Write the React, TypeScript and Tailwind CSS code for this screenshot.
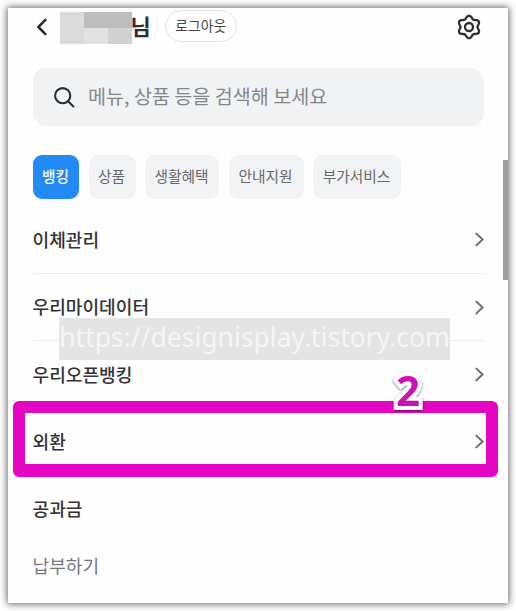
const tabs = [
    { label: "뱅킹", width: "w-[46px]", active: true },
    { label: "상품", width: "w-[47px]" },
    { label: "생활혜택", width: "w-[74px]" },
    { label: "안내지원", width: "w-[75px]" },
    { label: "부가서비스", width: "w-[88px]" },
];

const menus = ["이체관리", "우리마이데이터", "우리오픈뱅킹", "외환"];

// six rounded teeth, first one pointing up
const gearPoints = Array.from({ length: 72 }, (_, i) => {
    const angle = (i * Math.PI) / 36;
    const radius = 9.85 + 1.4 * Math.cos(6 * angle);
    return `${(12 + radius * Math.sin(angle)).toFixed(2)},${(13 - radius * Math.cos(angle)).toFixed(2)}`;
}).join(" ");

function Chevron() {
    return (
        <svg width="9" height="15" viewBox="0 0 9 15" fill="none" stroke="#6c6c6e" strokeWidth="2" strokeLinecap="round">
            <path d="M1.4 1.6 7.6 7.5 1.4 13.4" />
        </svg>
    );
}

function Header() {
    return (
        <header className="flex h-[60px] items-start pl-[25px] pr-[27px]">
            <svg className="ml-1 mt-[10px]" width="11" height="18" viewBox="0 0 11 18" fill="none" stroke="#2b2b2d" strokeWidth="2.5" strokeLinecap="round">
                <path d="M8.4 1.9 1.3 9 8.4 16.1" />
            </svg>
            <div className="ml-3 mt-1 grid h-8 w-[72px] grid-cols-3 grid-rows-2">
                <div className="bg-[#dadadc]" />
                <div className="col-span-2 bg-[#bdbdbe]" />
                <div className="bg-[#dadadb]" />
                <div className="bg-[#e2e1df]" />
                <div className="bg-[#d1d1d3]" />
            </div>
            <span className="-ml-[1.5px] mt-px text-[22px] font-bold leading-8 text-[#2e2e30]">님</span>
            <button className="ml-[14px] mt-[2px] h-8 w-[72px] whitespace-nowrap rounded-full border border-[#e4e4e6] pb-px text-[13.8px] leading-none text-[#444]">
                로그아웃
            </button>
            <svg className="ml-auto mt-[6px]" width="24" height="26" viewBox="0 0 24 26" fill="none" stroke="#2e2e30" strokeWidth="2.3" strokeLinejoin="round">
                <polygon points={gearPoints} />
                <circle cx="12" cy="13" r="4" />
            </svg>
        </header>
    );
}

export default function App() {
    return (
        <div className="h-[611px] w-[516px] overflow-hidden bg-white p-2 font-['Noto_Sans_CJK_KR',sans-serif]">
            <main className="relative h-[595px] w-[500px] bg-[#fefefe] shadow-[0_0_7px_1px_rgba(0,0,0,0.6)]">
                <Header />
                <div className="mx-[25px] flex h-[58px] w-[451px] items-center rounded-[13px] bg-[#f1f2f4] pl-[21px]">
                    <svg width="21" height="21" viewBox="0 0 21 21" fill="none" stroke="#2c2e33" strokeWidth="2.1" strokeLinecap="round">
                        <circle cx="8.7" cy="8.7" r="7.6" />
                        <path d="m14.4 14.4 5 5" />
                    </svg>
                    <span className="ml-[13px] pb-[2px] text-[19.6px] text-[#85888b]">메뉴, 상품 등을 검색해 보세요</span>
                </div>
                <nav className="ml-[25px] mt-[29px] flex gap-[9.5px]">
                    {tabs.map((tab) => (
                        <button
                            key={tab.label}
                            className={`h-11 shrink-0 whitespace-nowrap rounded-[9px] pb-[2px] pr-px text-[14.7px] ${tab.width} ${
                                tab.active ? "bg-[#2389f3] font-medium text-white" : "bg-[#f2f3f5] text-[#66686b]"
                            }`}
                        >
                            {tab.label}
                        </button>
                    ))}
                </nav>
                <ul className="ml-[24.5px] mt-[7.6px] w-[451.5px]">
                    {menus.map((menu) => (
                        <li
                            key={menu}
                            className="flex h-[67.3px] items-center justify-between border-b border-[#ededee] text-[18.1px] font-medium text-[#333335]"
                        >
                            <span>{menu}</span>
                            <Chevron />
                        </li>
                    ))}
                </ul>
                <div className="ml-[24.5px] flex h-[66px] items-center text-[18.1px] font-medium text-[#333335]">공과금</div>
                <div className="ml-[24.5px] flex h-[47px] items-center text-[18.1px] text-[#77777a]">납부하기</div>

                <div className="absolute left-[495px] top-[152px] h-[120px] w-[5px] bg-[#9c9c9c]" />
                <div className="absolute left-[51px] top-[310px] flex h-[42px] w-[391px] items-center justify-center whitespace-nowrap bg-[#e1e1e1]/90 pb-[2px] font-['Noto_Sans',sans-serif] text-[26.5px] text-[#f5f5f5]">
                    https://designisplay.tistory.com
                </div>
                <div className="absolute left-[5px] top-[393px] h-[76px] w-[485px] rounded-md border-[12px] border-b-[13px] border-[#e506c3]" />
                <div className="absolute left-[388px] top-[358px] font-['Noto_Sans',sans-serif] text-[42px] font-bold leading-[48px] text-[#cb12b2] [-webkit-text-stroke:8px_white] [paint-order:stroke_fill] [stroke-linejoin:round] drop-shadow-[0_1px_1px_rgba(0,0,0,0.5)]">
                    2
                </div>
            </main>
        </div>
    );
}
